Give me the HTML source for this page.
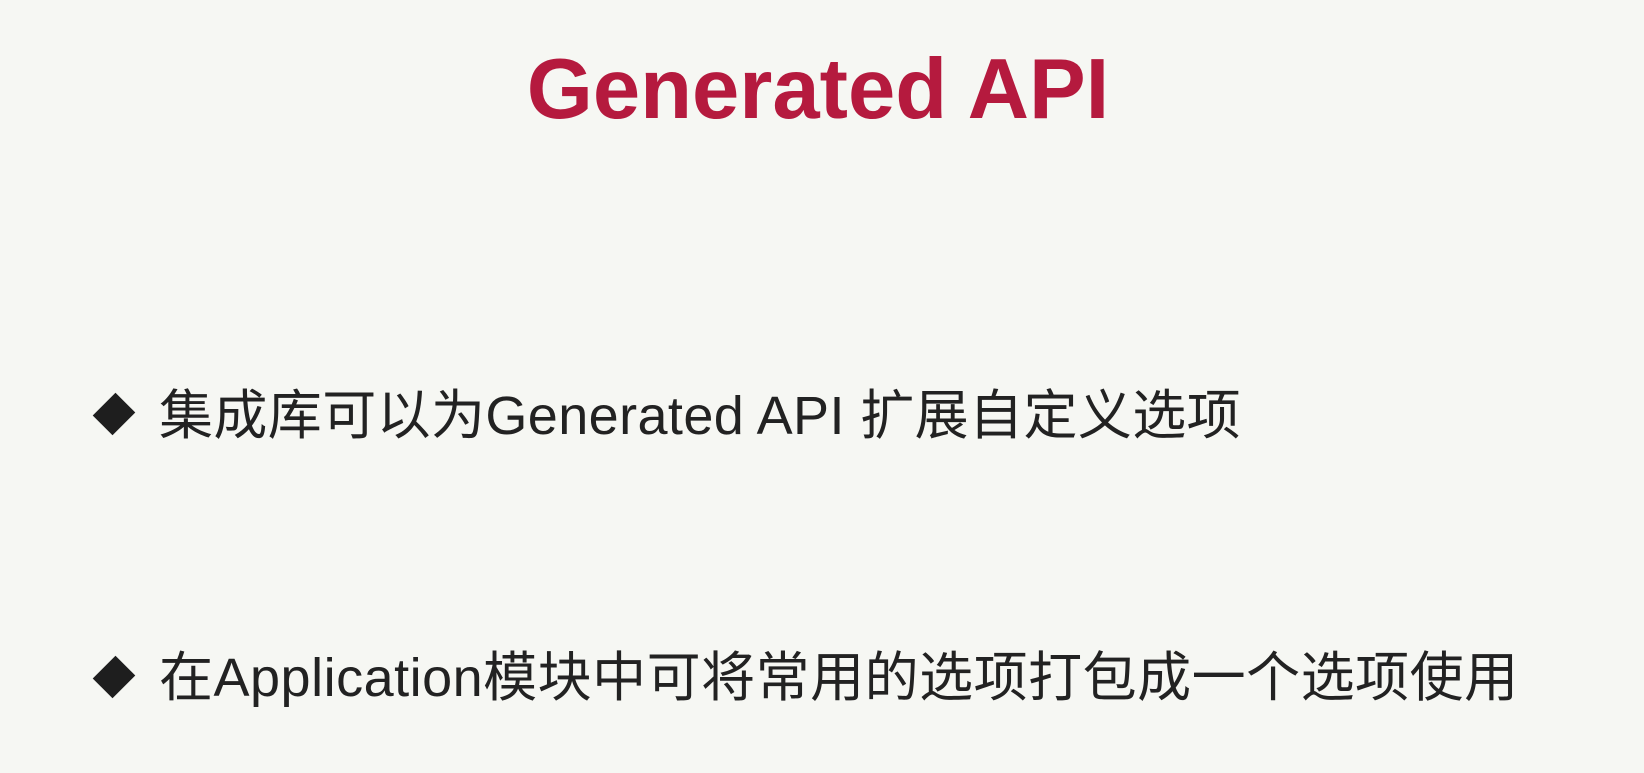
<!DOCTYPE html>
<html><head><meta charset="utf-8"><style>
html,body{margin:0;padding:0}
body{width:1644px;height:773px;background:#f6f7f3;position:relative;overflow:hidden;font-family:"Liberation Sans","Noto Sans CJK SC",sans-serif}
.title{position:absolute;left:0;width:1644px;text-align:center;top:40px;font-size:85px;font-weight:bold;color:#b51a3e;line-height:100px;margin-left:-4px}
.b{position:absolute;left:159px;font-size:54px;letter-spacing:0.4px;color:#222;line-height:60px;white-space:nowrap}
.d{position:absolute;width:28px;height:28px;background:#1e1e1e;transform:rotate(45deg) scaleY(1.15)}
</style></head><body>
<div class="title">Generated API</div>
<div class="d" style="left:100px;top:400px"></div>
<div class="b" style="top:386px">集成库可以为Generated API 扩展自定义选项</div>
<div class="d" style="left:100px;top:663px"></div>
<div class="b" style="top:648px;letter-spacing:0.5px">在Application模块中可将常用的选项打包成一个选项使用</div>
</body></html>
